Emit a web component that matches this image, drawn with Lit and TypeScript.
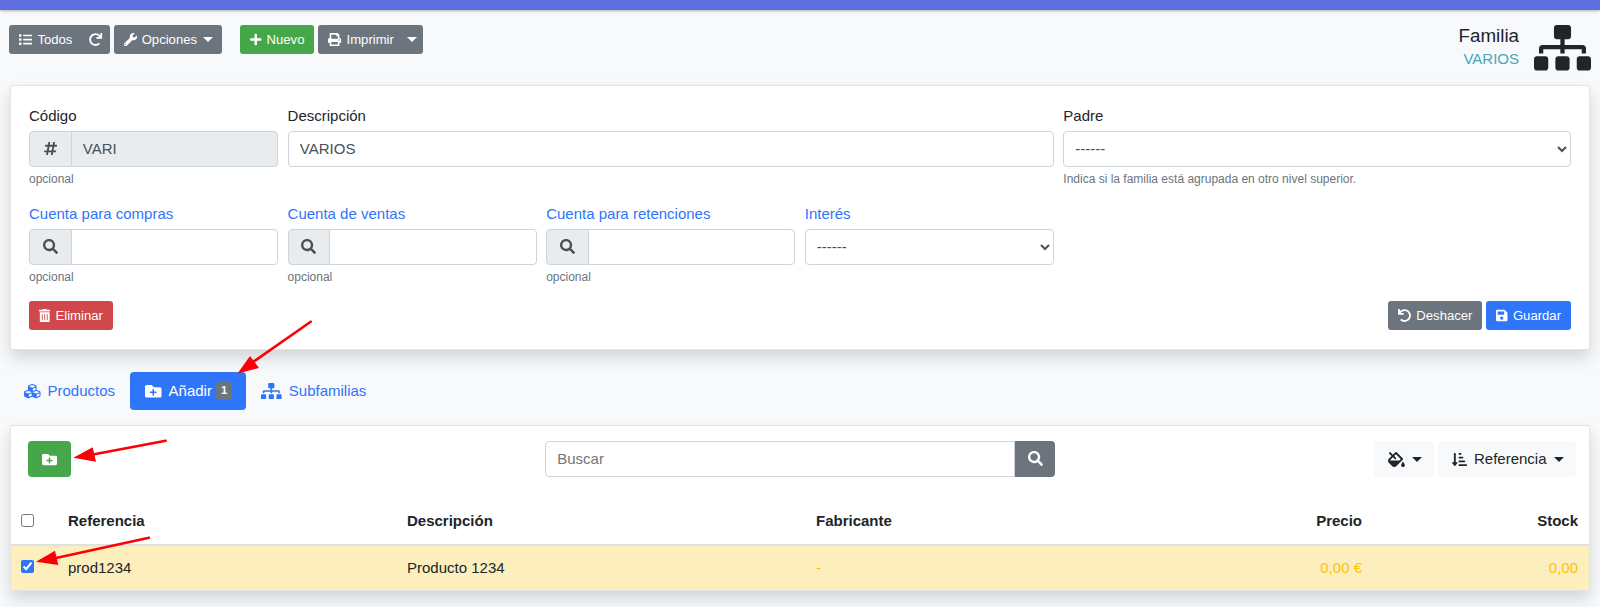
import { LitElement, html, css, svg } from "lit";
import { customElement } from "lit/decorators.js";

const P: Record<string, [number, string]> = {
  list: [512, "M80 368H16a16 16 0 0 0-16 16v64a16 16 0 0 0 16 16h64a16 16 0 0 0 16-16v-64a16 16 0 0 0-16-16zm0-320H16A16 16 0 0 0 0 64v64a16 16 0 0 0 16 16h64a16 16 0 0 0 16-16V64a16 16 0 0 0-16-16zm0 160H16a16 16 0 0 0-16 16v64a16 16 0 0 0 16 16h64a16 16 0 0 0 16-16v-64a16 16 0 0 0-16-16zm416 176H176a16 16 0 0 0-16 16v32a16 16 0 0 0 16 16h320a16 16 0 0 0 16-16v-32a16 16 0 0 0-16-16zm0-320H176a16 16 0 0 0-16 16v32a16 16 0 0 0 16 16h320a16 16 0 0 0 16-16V80a16 16 0 0 0-16-16zm0 160H176a16 16 0 0 0-16 16v32a16 16 0 0 0 16 16h320a16 16 0 0 0 16-16v-32a16 16 0 0 0-16-16z"],
  redo: [512, "M500.33 0h-47.41a12 12 0 0 0-12 12.57l4 82.76A247.42 247.42 0 0 0 256 8C119.34 8 7.9 119.53 8 256.19 8.1 393.07 119.1 504 256 504a247.1 247.1 0 0 0 166.18-63.91 12 12 0 0 0 .48-17.43l-34-34a12 12 0 0 0-16.38-.55A176 176 0 1 1 402.1 157.8l-101.53-4.87a12 12 0 0 0-12.57 12v47.41a12 12 0 0 0 12 12h200.33a12 12 0 0 0 12-12V12a12 12 0 0 0-12-12z"],
  undo: [512, "M212.333 224.333H12c-6.627 0-12-5.373-12-12V12C0 5.373 5.373 0 12 0h48c6.627 0 12 5.373 12 12v78.112C117.773 39.279 184.26 7.47 258.175 8.007c136.906.994 246.448 111.623 246.157 248.532C504.041 393.258 393.12 504 256.333 504c-64.089 0-122.496-24.313-166.51-64.215-5.099-4.622-5.334-12.554-.467-17.42l33.967-33.967c4.474-4.474 11.662-4.717 16.401-.525C170.76 415.336 211.58 432 256.333 432c97.268 0 176-78.716 176-176 0-97.267-78.716-176-176-176-58.496 0-110.28 28.476-142.274 72.333h98.274c6.627 0 12 5.373 12 12v48c0 6.627-5.373 12-12 12z"],
  wrench: [512, "M507.73 109.1c-2.24-9.03-13.54-12.09-20.12-5.51l-74.36 74.36-67.88-11.31-11.31-67.88 74.36-74.36c6.62-6.62 3.43-17.9-5.66-20.16-47.38-11.74-99.55.91-136.58 37.93-39.64 39.64-50.55 97.1-34.05 147.2L18.74 402.76c-24.99 24.99-24.99 65.51 0 90.5 24.99 24.99 65.51 24.99 90.5 0l213.21-213.21c50.12 16.71 107.47 5.68 147.37-34.22 37.07-37.07 49.7-89.32 37.91-136.73zM64 472c-13.25 0-24-10.75-24-24 0-13.26 10.75-24 24-24s24 10.74 24 24c0 13.25-10.75 24-24 24z"],
  plus: [448, "M416 208H272V64c0-17.67-14.33-32-32-32h-32c-17.67 0-32 14.33-32 32v144H32c-17.67 0-32 14.33-32 32v32c0 17.67 14.33 32 32 32h144v144c0 17.67 14.33 32 32 32h32c17.67 0 32-14.33 32-32V304h144c17.67 0 32-14.33 32-32v-32c0-17.67-14.33-32-32-32z"],
  print: [512, "M448 192V77.25c0-8.49-3.37-16.62-9.37-22.63L393.37 9.37c-6-6-14.14-9.37-22.63-9.37H96C78.33 0 64 14.33 64 32v160c-35.35 0-64 28.65-64 64v112c0 8.84 7.16 16 16 16h48v96c0 17.67 14.33 32 32 32h320c17.67 0 32-14.33 32-32v-96h48c8.84 0 16-7.16 16-16V256c0-35.35-28.65-64-64-64zm-64 256H128v-96h256v96zm0-224H128V64h192v48c0 8.84 7.16 16 16 16h48v96zm48 72c-13.25 0-24-10.75-24-24 0-13.26 10.75-24 24-24s24 10.74 24 24c0 13.25-10.75 24-24 24z"],
  search: [512, "M505 442.7L405.3 343c-4.5-4.5-10.6-7-17-7H372c27.6-35.3 44-79.7 44-128C416 93.1 322.9 0 208 0S0 93.1 0 208s93.1 208 208 208c48.3 0 92.7-16.4 128-44v16.3c0 6.4 2.5 12.5 7 17l99.7 99.7c9.4 9.4 24.6 9.4 33.9 0l28.3-28.3c9.4-9.4 9.4-24.6.1-34zM208 336c-70.7 0-128-57.2-128-128 0-70.7 57.2-128 128-128 70.7 0 128 57.2 128 128 0 70.7-57.2 128-128 128z"],
  hashtag: [448, "M440.667 182.109l7.143-40c1.313-7.355-4.342-14.109-11.813-14.109h-74.81l14.623-81.891C377.123 38.754 371.468 32 363.997 32h-40.632a12 12 0 0 0-11.813 9.891L296.175 128H197.54l14.623-81.891C213.477 38.754 207.822 32 200.35 32h-40.632a12 12 0 0 0-11.813 9.891L132.528 128H53.432a12 12 0 0 0-11.813 9.891l-7.143 40C33.163 185.246 38.818 192 46.289 192h74.81L98.242 320H19.146a12 12 0 0 0-11.813 9.891l-7.143 40C-1.123 377.246 4.532 384 12.003 384h74.81L72.19 465.891C70.877 473.246 76.532 480 84.003 480h40.632a12 12 0 0 0 11.813-9.891L151.826 384h98.634l-14.623 81.891C234.523 473.246 240.178 480 247.65 480h40.632a12 12 0 0 0 11.813-9.891L315.472 384h79.096a12 12 0 0 0 11.813-9.891l7.143-40c1.313-7.355-4.342-14.109-11.813-14.109h-74.81l22.857-128h79.096a12 12 0 0 0 11.813-9.891zM261.889 320h-98.634l22.857-128h98.634l-22.857 128z"],
  trash: [448, "M32 464a48 48 0 0 0 48 48h288a48 48 0 0 0 48-48V128H32zm272-256a16 16 0 0 1 32 0v224a16 16 0 0 1-32 0zm-96 0a16 16 0 0 1 32 0v224a16 16 0 0 1-32 0zm-96 0a16 16 0 0 1 32 0v224a16 16 0 0 1-32 0zM432 32H312l-9.4-18.7A24 24 0 0 0 281.1 0H166.8a23.72 23.72 0 0 0-21.4 13.3L136 32H16A16 16 0 0 0 0 48v32a16 16 0 0 0 16 16h416a16 16 0 0 0 16-16V48a16 16 0 0 0-16-16z"],
  save: [448, "M433.941 129.941l-83.882-83.882A48 48 0 0 0 316.118 32H48C21.49 32 0 53.49 0 80v352c0 26.51 21.49 48 48 48h352c26.51 0 48-21.49 48-48V163.882a48 48 0 0 0-14.059-33.941zM224 416c-35.346 0-64-28.654-64-64 0-35.346 28.654-64 64-64s64 28.654 64 64c0 35.346-28.654 64-64 64zm96-304.52V212c0 6.627-5.373 12-12 12H76c-6.627 0-12-5.373-12-12V108c0-6.627 5.373-12 12-12h228.52c3.183 0 6.235 1.264 8.485 3.515l3.48 3.48A11.996 11.996 0 0 1 320 111.48z"],
  sitemap: [640, "M128 352H32c-17.67 0-32 14.33-32 32v96c0 17.67 14.33 32 32 32h96c17.67 0 32-14.33 32-32v-96c0-17.67-14.33-32-32-32zm-24-80h192v48h48v-48h192v48h48v-57.59c0-21.17-17.23-38.41-38.41-38.41H344v-64h40c17.67 0 32-14.33 32-32V32c0-17.67-14.33-32-32-32H256c-17.67 0-32 14.33-32 32v96c0 17.67 14.33 32 32 32h40v64H94.41C73.23 224 56 241.23 56 262.41V320h48v-48zm264 80h-96c-17.67 0-32 14.33-32 32v96c0 17.67 14.33 32 32 32h96c17.67 0 32-14.33 32-32v-96c0-17.67-14.33-32-32-32zm240 0h-96c-17.67 0-32 14.33-32 32v96c0 17.67 14.33 32 32 32h96c17.67 0 32-14.33 32-32v-96c0-17.67-14.33-32-32-32z"],
  folderPlus: [512, "M464,128H272L208,64H48A48,48,0,0,0,0,112V400a48,48,0,0,0,48,48H464a48,48,0,0,0,48-48V176A48,48,0,0,0,464,128ZM359.5,296a16,16,0,0,1-16,16h-64v64a16,16,0,0,1-16,16h-16a16,16,0,0,1-16-16V312h-64a16,16,0,0,1-16-16V280a16,16,0,0,1,16-16h64V200a16,16,0,0,1,16-16h16a16,16,0,0,1,16,16v64h64a16,16,0,0,1,16,16Z"],
  cubes: [512, "M488.6 250.2L392 214V105.5c0-15-9.3-28.4-23.4-33.7l-100-37.5c-8.1-3.1-17.1-3.1-25.3 0l-100 37.5c-14.1 5.3-23.4 18.7-23.4 33.7V214l-96.6 36.2C9.3 255.5 0 268.9 0 283.9V394c0 13.6 7.7 26.1 19.9 32.2l100 50c10.1 5.1 22.1 5.1 32.2 0l103.9-52 103.9 52c10.1 5.1 22.1 5.1 32.2 0l100-50c12.2-6.1 19.9-18.6 19.9-32.2V283.9c0-15-9.3-28.4-23.4-33.7zM358 214.8l-85 31.9v-68.2l85-37v73.3zM154 104.1l102-38.2 102 38.2v.6l-102 41.4-102-41.4v-.6zm84 291.1l-85 42.5v-79.1l85-38.8v75.4zm0-112l-102 41.4-102-41.4v-.6l102-38.2 102 38.2v.6zm240 112l-85 42.5v-79.1l85-38.8v75.4zm0-112l-102 41.4-102-41.4v-.6l102-38.2 102 38.2v.6z"],
  fill: [576, "M512 320s-64 92.65-64 128c0 35.35 28.66 64 64 64s64-28.65 64-64-64-128-64-128zm-9.37-102.94L294.94 9.37C288.69 3.12 280.5 0 272.31 0s-16.38 3.12-22.63 9.37l-81.58 81.58L81.93 4.76c-6.25-6.25-16.38-6.25-22.62 0L36.69 27.38c-6.24 6.25-6.24 16.38 0 22.62l86.19 86.18-94.76 94.76c-37.49 37.48-37.49 98.26 0 135.75l117.19 117.19c18.74 18.74 43.31 28.12 67.87 28.12 24.57 0 49.13-9.37 67.87-28.12l221.57-221.57c12.5-12.5 12.5-32.75.01-45.25zm-116.22 70.97H65.93c1.36-3.84 3.57-7.98 7.43-11.83l13.15-13.15 81.61-81.61 58.6 58.6c12.49 12.49 32.75 12.49 45.24 0s12.49-32.75 0-45.24l-58.6-58.6 58.95-58.95 162.44 162.44-48.34 48.34z"],
  sort: [512, "M240 96h64a16 16 0 0 0 16-16V48a16 16 0 0 0-16-16h-64a16 16 0 0 0-16 16v32a16 16 0 0 0 16 16zm0 128h128a16 16 0 0 0 16-16v-32a16 16 0 0 0-16-16H240a16 16 0 0 0-16 16v32a16 16 0 0 0 16 16zm256 192H240a16 16 0 0 0-16 16v32a16 16 0 0 0 16 16h256a16 16 0 0 0 16-16v-32a16 16 0 0 0-16-16zm-256-64h192a16 16 0 0 0 16-16v-32a16 16 0 0 0-16-16H240a16 16 0 0 0-16 16v32a16 16 0 0 0 16 16zm-64 0h-48V48a16 16 0 0 0-16-16H80a16 16 0 0 0-16 16v304H16c-14.19 0-21.37 17.24-11.29 27.31l80 96a16 16 0 0 0 22.62 0l80-96C197.35 369.26 190.22 352 176 352z"],
};

function icon(name: string, cls = "ic") {
  const [w, d] = P[name];
  return html`<svg class=${cls} viewBox="0 0 ${w} 512" aria-hidden="true" fill="currentColor">${svg`<path d=${d}></path>`}</svg>`;
}

function field(label: string, help: string, blue = false, span = "s2", inner: unknown = null) {
  return html`<div class=${span}>
    <label class=${blue ? "lbl blue" : "lbl"}>${label}</label>
    ${inner}
    <div class="help">${help}</div>
  </div>`;
}

@customElement("app-root")
export class AppRoot extends LitElement {
  static styles = css`
    :host { display: block; position: relative; height: 607px; overflow: hidden; background: #f8f9fb; color: #212529;
      font-family: "Liberation Sans", Arial, sans-serif; font-size: 15px; line-height: 1.5; }
    * { box-sizing: border-box; }
    .ic { height: 1em; width: auto; display: inline-block; flex: none; }
    .topbar { height: 10px; background: #5f6edf; box-shadow: 0 1px 3px rgba(0,0,0,.3); }
    .toolbar { display: flex; justify-content: space-between; align-items: flex-start; padding: 15px 9px 0 9.3px; height: 75px; }
    .tb-left { display: flex; align-items: flex-start; }
    .btn { display: inline-flex; align-items: center; height: 29.2px; padding: 0 9px; border: 1px solid transparent; border-radius: 3px;
      font-size: 13.125px; color: #fff; white-space: nowrap; font-family: inherit; line-height: 1.5; }
    .gray { background: #6c757d; }
    .green { background: #45a74a; }
    .blue-b { background: #2e75fa; }
    .red { background: #d0474c; }
    .btn .ic { margin-right: 5px; }
    .caret { display: inline-block; width: 0; height: 0; border-top: 5px solid currentColor; border-left: 5px solid transparent; border-right: 5px solid transparent; }
    .group { display: inline-flex; }
    .group .btn:first-child { border-radius: 3px 0 0 3px; }
    .group .btn:last-child { border-radius: 0 3px 3px 0; }
    .btn.refresh { padding: 0 6px; }
    .refresh .ic { margin-right: 0; }
    .caret-o { margin-left: 6px; margin-right: -1px; }
    .caret-p { margin-left: 13px; margin-right: -4px; }
    .ml4 { margin-left: 4px; }
    .ml18 { margin-left: 18px; }
    .title { display: flex; align-items: flex-start; }
    .title-t { text-align: right; margin-right: 15px; }
    .fam { font-size: 18.75px; line-height: 24px; margin-top: -1px; }
    .var { font-size: 15px; line-height: 21px; color: #44a7c0; }
    .bigicon { height: 45.6px; color: #212529; display: block; }
    .card { margin: 0 10px; background: #fff; border: 1px solid rgba(0,0,0,.1); border-radius: 4px; box-shadow: 0 8px 16px rgba(0,0,0,.15); }
    .form { height: 265px; padding: 18px 18px 0; display: flex; flex-direction: column; }
    .grid { display: grid; grid-template-columns: repeat(6, minmax(0, 1fr)); column-gap: 9.5px; }
    .s1 { grid-column: span 1; min-width: 0; }
    .s2 { grid-column: span 2; min-width: 0; }
    .s3 { grid-column: span 3; min-width: 0; }
    .lbl { display: block; height: 23.5px; padding-top: 1px; margin-bottom: 3.5px; }
    .blue { color: #2e75fa; }
    .help { font-size: 12px; line-height: 18px; margin-top: 3.5px; color: #6c757d; margin-bottom: 13.5px; min-height: 18px; }
    .ctl { display: block; width: 100%; height: 35.75px; padding: 0 11.25px; border: 1px solid #ced4da; border-radius: 4px; background: #fff; color: #495057; font: 15px/1.5 "Liberation Sans", Arial, sans-serif; outline: none; }
    select.ctl { padding-left: 7px; }
    .ig { display: flex; height: 35.75px; }
    .ig-t { width: 42.5px; flex: none; display: flex; align-items: center; justify-content: center; background: #e9ecef; border: 1px solid #ced4da; border-radius: 4px 0 0 4px; color: #495057; }
    .ig .ctl { border-radius: 0 4px 4px 0; margin-left: -1px; flex: 1; min-width: 0; width: auto; }
    .ctl.ro { background: #e9ecef; }
    .actions { display: flex; justify-content: space-between; margin-top: 1.5px; }
    .actions > div { display: flex; gap: 4px; }
    .tabs { display: flex; height: 38px; margin: 22px 0 15px; padding-left: 9px; font-size: 15px; color: #2e75fa; }
    .tab { display: flex; align-items: center; padding: 0 15px; border-radius: 4px; }
    .tab .ic { margin-right: 7px; height: 1.1em; }
    .tab.on { background: #2e75fa; color: #fff; padding-right: 14px; }
    .badge { margin-left: 4px; background: #6c757d; color: #fff; font-size: 11.25px; font-weight: 700; line-height: 1; padding: 3.5px 5px; border-radius: 3.5px; }
    .list { height: 166px; overflow: hidden; }
    .ltop { display: grid; grid-template-columns: 517px 510px minmax(0, 1fr); align-items: start; height: 36px; margin: 15px 13.5px 0 17px; }
    .addbtn { display: flex; width: 43px; height: 36px; align-items: center; justify-content: center; background: #45a74a; color: #fff; border-radius: 4px; font-size: 15px; }
    .search { display: flex; height: 35.75px; }
    .search .ctl { border-radius: 4px 0 0 4px; flex: 1; color: #6c757d; padding-bottom: 1.5px; }
    .search-b { width: 40px; flex: none; display: flex; align-items: center; justify-content: center; background: #6c757d; color: #fff; border-radius: 0 4px 4px 0; }
    .ltr { display: flex; justify-content: flex-end; gap: 4px; }
    .lbtn { display: inline-flex; align-items: center; height: 36px; padding: 0 13px; border-radius: 4px; background: #f8f9fa; color: #212529; gap: 7px; }
    .lbtn.fillb { padding: 0 12px 0 14px; }
    .lbtn.sortb { padding: 0 12px 0 14px; }
    table { width: 100%; table-layout: fixed; border-collapse: collapse; margin-top: 14px; font-size: 15px; }
    th, td { padding: 0 8px; text-align: left; }
    th { font-weight: 700; height: 54px; border-bottom: 2px solid #dee2e6; padding-top: 8px; }
    td { height: 45px; background: #fdefbd; }
    .r { text-align: right; }
    .y { color: #ffc107; }
    th:last-child, td:last-child { padding-right: 11px; }
    th:first-child, td:first-child { padding-left: 10px; line-height: 0; }
    input[type=checkbox] { width: 13px; height: 13px; margin: 0; accent-color: #2e75fa; vertical-align: middle; }
    th input[type=checkbox] { margin-bottom: 2px; }
    td input[type=checkbox] { margin-bottom: 3px; }
    .col-a { width: 49px; } .col-b { width: 339px; } .col-c { width: 409px; } .col-d { width: 350px; } .col-e { width: 212px; }
    .arrows { position: absolute; left: 0; top: 0; width: 1600px; height: 607px; pointer-events: none; }
  `;

  render() {
    return html`
      <div class="topbar"></div>
      <div class="toolbar">
        <div class="tb-left">
          <div class="group">
            <span class="btn gray">${icon("list")}Todos</span>
            <span class="btn gray refresh">${icon("redo")}</span>
          </div>
          <span class="btn gray ml4">${icon("wrench")}Opciones<span class="caret caret-o"></span></span>
          <span class="btn green ml18">${icon("plus")}Nuevo</span>
          <span class="btn gray ml4">${icon("print")}Imprimir<span class="caret caret-p"></span></span>
        </div>
        <div class="title">
          <div class="title-t"><div class="fam">Familia</div><div class="var">VARIOS</div></div>
          ${icon("sitemap", "bigicon")}
        </div>
      </div>

      <div class="card form">
        <div class="grid">
          ${field("Código", "opcional", false, "s1", html`<div class="ig"><span class="ig-t">${icon("hashtag")}</span><input class="ctl ro" readonly .value=${"VARI"} /></div>`)}
          ${field("Descripción", "", false, "s3", html`<input class="ctl" .value=${"VARIOS"} />`)}
          ${field("Padre", "Indica si la familia está agrupada en otro nivel superior.", false, "s2", html`<select class="ctl"><option>------</option></select>`)}
        </div>
        <div class="grid">
          ${field("Cuenta para compras", "opcional", true, "s1", html`<div class="ig"><span class="ig-t">${icon("search")}</span><input class="ctl" /></div>`)}
          ${field("Cuenta de ventas", "opcional", true, "s1", html`<div class="ig"><span class="ig-t">${icon("search")}</span><input class="ctl" /></div>`)}
          ${field("Cuenta para retenciones", "opcional", true, "s1", html`<div class="ig"><span class="ig-t">${icon("search")}</span><input class="ctl" /></div>`)}
          ${field("Interés", "", true, "s1", html`<select class="ctl"><option>------</option></select>`)}
        </div>
        <div class="actions">
          <div><span class="btn red">${icon("trash")}Eliminar</span></div>
          <div>
            <span class="btn gray">${icon("undo")}Deshacer</span>
            <span class="btn blue-b">${icon("save")}Guardar</span>
          </div>
        </div>
      </div>

      <div class="tabs">
        <div class="tab">${icon("cubes")}Productos</div>
        <div class="tab on">${icon("folderPlus")}Añadir<span class="badge">1</span></div>
        <div class="tab">${icon("sitemap")}Subfamilias</div>
      </div>

      <div class="card list">
        <div class="ltop">
          <div><span class="addbtn">${icon("folderPlus")}</span></div>
          <div class="search"><input class="ctl" placeholder="Buscar" /><span class="search-b">${icon("search")}</span></div>
          <div class="ltr">
            <span class="lbtn fillb">${icon("fill")}<span class="caret"></span></span>
            <span class="lbtn sortb">${icon("sort")}Referencia<span class="caret"></span></span>
          </div>
        </div>
        <table>
          <colgroup><col class="col-a" /><col class="col-b" /><col class="col-c" /><col class="col-d" /><col class="col-e" /><col /></colgroup>
          <thead><tr>
            <th><input type="checkbox" /></th><th>Referencia</th><th>Descripción</th><th>Fabricante</th>
            <th class="r">Precio</th><th class="r">Stock</th>
          </tr></thead>
          <tbody><tr>
            <td><input type="checkbox" checked /></td><td>prod1234</td><td>Producto 1234</td><td class="y">-</td>
            <td class="r y">0,00 €</td><td class="r y">0,00</td>
          </tr></tbody>
        </table>
      </div>

      <svg class="arrows" viewBox="0 0 1600 607" aria-hidden="true">
        ${svg`
          <line x1="310.7" y1="321.7" x2="253" y2="362" stroke="#fb0007" stroke-width="2.6" stroke-linecap="round"></line>
          <polygon points="237.5,373.5 250,356 259,368" fill="#fb0007"></polygon>
          <line x1="165.7" y1="440.7" x2="93" y2="454.5" stroke="#fb0007" stroke-width="2.6" stroke-linecap="round"></line>
          <polygon points="73.3,457.7 92.7,447.3 96,461.7" fill="#fb0007"></polygon>
          <line x1="149" y1="537.7" x2="56" y2="558" stroke="#fb0007" stroke-width="2.6" stroke-linecap="round"></line>
          <polygon points="36,561.7 55,550.7 58.3,565" fill="#fb0007"></polygon>
        `}
      </svg>
    `;
  }
}
